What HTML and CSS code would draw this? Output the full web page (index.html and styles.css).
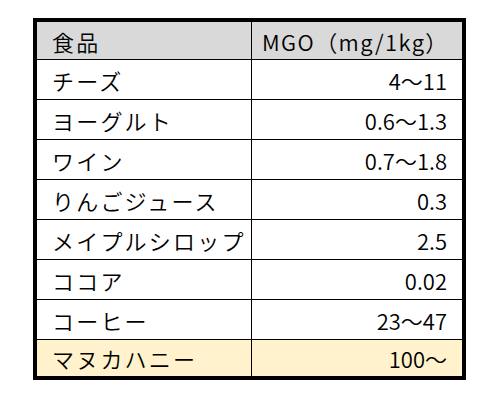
FILE: index.html
```html
<!DOCTYPE html>
<html lang="ja">
<head>
<meta charset="utf-8">
<link rel="stylesheet" href="styles.css">
</head>
<body>
<div class="sheet">
  <div class="cell name head">食品</div>
  <div class="cell value head">MGO（mg/1kg）</div>
  <div class="cell name">チーズ</div>
  <div class="cell value">4～11</div>
  <div class="cell name">ヨーグルト</div>
  <div class="cell value">0.6～1.3</div>
  <div class="cell name">ワイン</div>
  <div class="cell value">0.7～1.8</div>
  <div class="cell name">りんごジュース</div>
  <div class="cell value">0.3</div>
  <div class="cell name">メイプルシロップ</div>
  <div class="cell value">2.5</div>
  <div class="cell name">ココア</div>
  <div class="cell value">0.02</div>
  <div class="cell name">コーヒー</div>
  <div class="cell value">23～47</div>
  <div class="cell name last">マヌカハニー</div>
  <div class="cell value last">100～</div>
</div>
</body>
</html>
```
FILE: styles.css
```css
html, body {
  margin: 0;
  padding: 0;
  background: #fff;
}
body {
  font-family: "Noto Sans CJK JP", "Noto Sans", sans-serif;
  font-size: 22px;
  font-weight: 350;
  color: #000;
}
.sheet {
  margin: 18px 0 0 33px;
  width: 425px;
  border: 4px solid #000;
  display: grid;
  grid-template-columns: 215px 210px;
}
.cell {
  box-sizing: border-box;
  height: 40px;
  border-bottom: 1px solid #000;
  display: flex;
  align-items: center;
  white-space: nowrap;
  line-height: 1;
}
.name {
  border-right: 1px solid #000;
  padding-left: 15px;
  letter-spacing: 2.2px;
}
.value {
  justify-content: flex-end;
  padding-right: 15px;
}
.head {
  height: 38px;
  background: #d9d9d9;
}
.value.head {
  justify-content: flex-start;
  padding-left: 10px;
  letter-spacing: 1.4px;
}
.last {
  height: 36px;
  border-bottom: none;
  background: #fff2cc;
}
```
